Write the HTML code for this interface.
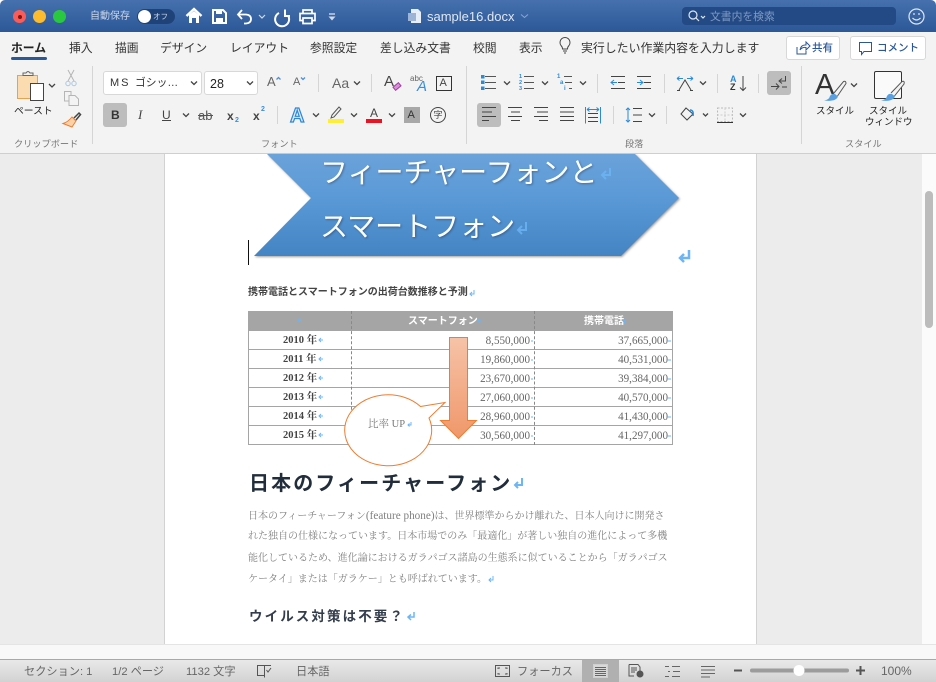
<!DOCTYPE html>
<html lang="ja"><head><meta charset="utf-8"><style>
*{box-sizing:border-box}
html,body{margin:0;padding:0;width:936px;height:682px;overflow:hidden;background:#fff}
body{position:relative;font-family:"Liberation Sans","Noto Sans CJK JP",sans-serif;color:#333}
.a{position:absolute}
.t{position:absolute;white-space:nowrap;line-height:1}
.tab{font-size:11.8px;color:#333;top:43px}
.s{font-family:"Liberation Serif","Noto Serif CJK SC",serif}
.gl{font-size:9.2px;color:#777;top:140px}
.cell{position:absolute;white-space:nowrap;line-height:1;font-family:"Liberation Serif","Noto Serif CJK SC",serif;font-size:11.1px;color:#666}
.r{text-align:right}
.y{font-weight:bold;color:#444;font-size:10.5px}
.sv{position:absolute;overflow:visible}
.body-l{position:absolute;left:248px;width:425px;white-space:nowrap;font-family:"Liberation Serif","Noto Serif CJK SC",serif;font-size:10px;color:#808080;line-height:1}
.st{font-size:11.2px;color:#666;top:667px}
.lb{font-size:9.5px;color:#222}
</style></head><body>
<!-- title bar -->
<div class="a" style="left:0;top:0;width:936px;height:32px;background:linear-gradient(#4671ae,#2c5898);border-radius:5px 5px 0 0"></div>
<div class="a" style="left:13px;top:10px;width:13px;height:13px;border-radius:50%;background:#fc5c57"></div><div class="a" style="left:17.5px;top:14.5px;width:4px;height:4px;border-radius:50%;background:#7d1512"></div>
<div class="a" style="left:33px;top:10px;width:13px;height:13px;border-radius:50%;background:#fdbc2e"></div>
<div class="a" style="left:53px;top:10px;width:13px;height:13px;border-radius:50%;background:#2ac83f"></div>
<span class="t" style="left:90px;top:12px;font-size:10px;color:#c9d6ea">自動保存</span>
<div class="a" style="left:137px;top:9px;width:38px;height:15px;border-radius:8px;background:#1f4379"></div>
<div class="a" style="left:138px;top:10px;width:13px;height:13px;border-radius:50%;background:#fff"></div>
<span class="t" style="left:153px;top:13px;font-size:7.500px;color:#c9d6ea">オフ</span>
<svg class="sv" style="left:0;top:0" width="936" height="32" fill="none" stroke="#fff" stroke-width="1.800">
<path d="M186.500 16L194 9 201.500 16" stroke-width="2.400"/><path d="M189 15L194 11 199 15V23H196V18H192V23H189Z" fill="#fff" stroke="none"/>
<path d="M213 10H223L226 13V23H213Z" stroke-width="2"/><path d="M216 10V14H222V10Z" fill="#fff" stroke="none"/><path d="M216 23V18H223V23Z" fill="#fff" stroke="none"/>
<path d="M242 10L238 14.500 242 19M238 14.500H246Q251 15 251 19T246 23.500H244" stroke-width="1.800"/>
<path d="M259 15L262 18 265 15" stroke-width="1.200" stroke="#cfdaeb"/>
<path d="M279 13A7 7 0 1 0 288 15.500M285 9.500V16H290" stroke-width="2"/>
<path d="M303 13.500V10H312V13.500M303 20.500H300V13.500H315V20.500H312M303 18H312V23.500H303Z" stroke-width="1.700"/>
<path d="M329 14H335" stroke="#cfdaeb" stroke-width="1.400"/><path d="M328.500 16.500H335.500L332 20.500Z" fill="#cfdaeb" stroke="none"/>
</svg>
<svg class="sv" style="left:408px;top:8px" width="14" height="17"><path d="M3 1H10L13 4V15H3Z" fill="#e8eef7"/><rect x="0" y="5" width="8" height="8" fill="#9db4d6"/></svg>
<span class="t" style="left:427px;top:10px;font-size:13px;color:#dfe7f3">sample16.docx</span>
<svg class="sv" style="left:520px;top:13px" width="10" height="7"><path d="M1 1.500L4.500 4.500 8 1.500" fill="none" stroke="#8ea7cc"/></svg>
<div class="a" style="left:682px;top:7px;width:214px;height:18px;border-radius:4px;background:#234a85"></div>
<svg class="sv" style="left:688px;top:10px" width="22" height="14" fill="none" stroke="#dfe7f3" stroke-width="1.200"><circle cx="5" cy="5" r="4"/><path d="M8 8L11 11"/><path d="M13 6L15 8 17 6"/></svg>
<span class="t" style="left:710px;top:12px;font-size:10.800px;color:#7f9ac4">文書内を検索</span>
<svg class="sv" style="left:908px;top:8px" width="17" height="17" fill="none" stroke="#dfe7f3" stroke-width="1.200"><circle cx="8.500" cy="8.500" r="7.500"/><path d="M4.500 10Q8.500 14 12.500 10"/><path d="M6 5V7M11 5V7"/></svg>

<!-- ribbon -->
<div class="a" style="left:0;top:32px;width:936px;height:122px;background:#f3f3f3;border-bottom:1px solid #cfcfcf"></div>
<span class="t tab" style="left:11px;font-weight:bold;color:#222">ホーム</span>
<div class="a" style="left:11px;top:57px;width:36px;height:3px;border-radius:2px;background:#2b5797"></div>
<span class="t tab" style="left:69px">挿入</span>
<span class="t tab" style="left:115px">描画</span>
<span class="t tab" style="left:160px">デザイン</span>
<span class="t tab" style="left:230px">レイアウト</span>
<span class="t tab" style="left:310px">参照設定</span>
<span class="t tab" style="left:380px">差し込み文書</span>
<span class="t tab" style="left:473px">校閲</span>
<span class="t tab" style="left:519px">表示</span>
<svg class="sv" style="left:558px;top:37px" width="14" height="18" fill="none" stroke="#444" stroke-width="1"><path d="M4.500 12Q4.500 10 3 8.500A5 5 0 1 1 11 8.500Q9.500 10 9.500 12ZM5 14H9M6 16H8"/></svg>
<span class="t tab" style="left:581px;font-size:11.900px">実行したい作業内容を入力します</span>
<div class="a" style="left:786px;top:36px;width:54px;height:24px;background:#fff;border:1px solid #d8d8d8;border-radius:3px"></div>
<svg class="sv" style="left:795px;top:41px" width="16" height="15" fill="none" stroke="#2b5797" stroke-width="1"><path d="M2 6V13H11V10M5 9Q6 4 10 4H11V1L15 5 11 9V6.500Q7 6 5 9Z"/></svg>
<span class="t" style="left:812px;top:43px;font-size:10.500px;color:#2b5797;font-weight:500">共有</span>
<div class="a" style="left:850px;top:36px;width:76px;height:24px;background:#fff;border:1px solid #d8d8d8;border-radius:3px"></div>
<svg class="sv" style="left:858px;top:41px" width="16" height="15" fill="none" stroke="#2b5797" stroke-width="1"><path d="M1.500 1.500H13.500V10.500H6L3.500 13.500V10.500H1.500Z"/></svg>
<span class="t" style="left:877px;top:43px;font-size:10.500px;color:#2b5797;font-weight:500">コメント</span>

<!-- separators -->
<div class="a" style="left:92px;top:66px;width:1px;height:78px;background:#d5d5d5"></div>
<div class="a" style="left:466px;top:66px;width:1px;height:78px;background:#d5d5d5"></div>
<div class="a" style="left:801px;top:66px;width:1px;height:78px;background:#d5d5d5"></div>

<!-- clipboard -->
<svg class="sv" style="left:12px;top:68px" width="72" height="36" fill="none">
<rect x="5.500" y="7.500" width="20" height="23" fill="#fbdcb0" stroke="#e8a24f"/>
<path d="M11 7.500V5H14Q16 2 18 5H21V7.500Z" fill="#f3f3f3" stroke="#666"/>
<rect x="18.500" y="15.500" width="13" height="17" fill="#fff" stroke="#444"/>
<path d="M37 16L40 19 43 16" stroke="#444" stroke-width="1.300"/>
</svg>
<span class="t" style="left:14px;top:107px;font-size:9.800px;color:#222">ペースト</span>
<svg class="sv" style="left:60px;top:68px" width="24" height="64" fill="none" stroke="#bbb">
<path d="M8 2L14 13M14 2L8 13" stroke="#b5b5b5"/><circle cx="8" cy="15.500" r="2.200" stroke="#a9c8e6"/><circle cx="14" cy="15.500" r="2.200" stroke="#a9c8e6"/>
<path d="M9 27.500H15L18.500 31V37.500H9ZM9 33H4.500V23.500H11V27" stroke="#b5b5b5"/>
<path d="M12 49L16 53 12 59 3 55.500Q8 54 12 49Z" fill="#fbd2a8" stroke="#ed7d31"/><path d="M14 50L19 45 20.500 46.500 16 52" stroke="#444" stroke-width="1.500"/>
</svg>
<span class="t gl" style="left:14px">クリップボード</span>

<!-- font row 1 -->
<div class="a" style="left:103px;top:71px;width:99px;height:24px;background:#fff;border:1px solid #d8d8d8;border-radius:3px"></div>
<span class="t" style="left:110px;top:78px;font-size:11px;letter-spacing:2px;color:#333">MS</span>
<span class="t" style="left:135px;top:78px;font-size:10.800px;color:#333">ゴシッ…</span>
<div class="a" style="left:204px;top:71px;width:54px;height:24px;background:#fff;border:1px solid #d8d8d8;border-radius:3px"></div>
<span class="t" style="left:210px;top:78px;font-size:12.500px;color:#222">28</span>
<svg class="sv" style="left:0;top:0" width="936" height="153" fill="none" stroke="#444" stroke-width="1.300">
<path d="M191 81.500L194 84.500 197 81.500M247 81.500L250 84.500 253 81.500M354 81.500L357 84.500 360 81.500"/>
<path d="M504 81.500L507 84.500 510 81.500M542 81.500L545 84.500 548 81.500M580 81.500L583 84.500 586 81.500M700 81.500L703 84.500 706 81.500"/>
<path d="M183 113.500L186 116.500 189 113.500M313 113.500L316 116.500 319 113.500M351 113.500L354 116.500 357 113.500M389 113.500L392 116.500 395 113.500"/>
<path d="M649 113.500L652 116.500 655 113.500M703 113.500L705.500 116 708 113.500M740 113.500L743 116.500 746 113.500"/>
<path d="M276.500 79.500L278.500 77.500 280.500 79.500M301 77.500L303 79.500 305 77.500" stroke="#4a90d9"/>
</svg>
<span class="t" style="left:267px;top:75px;font-size:13px;color:#666">A</span>
<span class="t" style="left:293px;top:77px;font-size:11px;color:#666">A</span>
<div class="a" style="left:318px;top:74px;width:1px;height:18px;background:#d5d5d5"></div>
<span class="t" style="left:332px;top:76px;font-size:14px;color:#666">Aa</span>
<div class="a" style="left:371px;top:74px;width:1px;height:18px;background:#d5d5d5"></div>
<span class="t" style="left:384px;top:74px;font-size:15px;color:#444">A</span>
<div class="a" style="left:393px;top:84px;width:8px;height:5px;background:#d88fd8;border:1px solid #a040a0;transform:rotate(-40deg)"></div>
<span class="t" style="left:410px;top:75px;font-size:8px;color:#666">abc</span>
<span class="t" style="left:417px;top:79px;font-size:15px;font-style:italic;color:#3a8fd9">A</span>
<div class="a" style="left:436px;top:76px;width:16px;height:15px;border:1px solid #333"></div>
<span class="t" style="left:439.500px;top:78px;font-size:11px;color:#444">A</span>

<!-- font row 2 -->
<div class="a" style="left:103px;top:103px;width:24px;height:24px;background:#bdbdbd;border-radius:3px"></div>
<span class="t" style="left:111px;top:109px;font-size:12px;font-weight:bold;color:#333">B</span>
<span class="t s" style="left:138px;top:108px;font-size:13px;font-style:italic;color:#444">I</span>
<span class="t" style="left:162px;top:109px;font-size:12px;color:#444">U</span><div class="a" style="left:162px;top:120px;width:9px;height:1px;background:#444"></div>
<span class="t" style="left:198px;top:109px;font-size:13px;color:#555">ab</span><div class="a" style="left:198px;top:115px;width:15px;height:1px;background:#555"></div>
<span class="t" style="left:227px;top:110px;font-size:12px;font-weight:bold;color:#444">x</span><span class="t" style="left:235px;top:117px;font-size:7px;color:#3a8fd9;font-weight:bold">2</span>
<span class="t" style="left:253px;top:110px;font-size:12px;font-weight:bold;color:#444">x</span><span class="t" style="left:261px;top:106px;font-size:7px;color:#3a8fd9;font-weight:bold">2</span>
<div class="a" style="left:277px;top:106px;width:1px;height:18px;background:#d5d5d5"></div>
<span class="t" style="left:290px;top:106px;font-size:20px;font-weight:bold;color:#dcecfa;-webkit-text-stroke:1.200px #2f86d6">A</span>
<svg class="sv" style="left:328px;top:104px" width="18" height="20" fill="none" stroke="#555"><path d="M4 11L11 3 13 5 6 13 3 14Z"/><rect x="0" y="15" width="16" height="4" fill="#ffee33" stroke="none"/></svg>
<span class="t" style="left:370px;top:107px;font-size:12px;color:#444">A</span>
<div class="a" style="left:366px;top:119px;width:16px;height:4px;background:#f01020"></div>
<div class="a" style="left:404px;top:107px;width:16px;height:16px;background:#a8a8a8"></div>
<span class="t" style="left:407.500px;top:110px;font-size:11px;color:#333">A</span>
<div class="a" style="left:430px;top:107px;width:16px;height:16px;border:1px solid #444;border-radius:50%"></div>
<span class="t" style="left:433.500px;top:110.500px;font-size:9px;color:#444">字</span>
<span class="t gl" style="left:261px">フォント</span>

<!-- paragraph icons -->
<svg class="sv" style="left:0;top:0" width="936" height="153" fill="none" stroke="#555" stroke-width="1">
<path d="M485 76.500H496M485 82.500H496M485 88.500H496M524 76.500H534M524 82.500H534M524 88.500H534M564 76.500H572M565 82.500H572M569 88.500H572"/>
<path d="M481 75H484.500V78.500H481ZM481 80.500H484.500V84H481ZM481 86.500H484.500V90H481Z" fill="#2b8ad6" stroke="none"/>
<path d="M611 76.500H625M618 82.500H625M611 88.500H625M637 76.500H651M637 88.500H651M644 82.500H651" stroke="#444"/>
<path d="M617 82.500H611M614 80L611 82.500 614 85M637 82.500H643M640 80L643 82.500 640 85" stroke="#2b8ad6"/>
<path d="M677 90.500H680M690 90.500H693M679 90L685 80 691 90" stroke="#444"/><path d="M677 78.500H683M687 78.500H693M677 78.500L679.500 76.500M677 78.500L679.500 80.500M693 78.500L690.500 76.500M693 78.500L690.500 80.500" stroke="#2b8ad6"/>
<path d="M743 76V90.500M740 87.500L743 90.500 746 87.500" stroke="#444"/>
<path d="M597.500 74V93M664.500 74V93M717.500 74V93M758.500 74V93" stroke="#d5d5d5"/>
<!-- align row -->
<path d="M508 107.500H522M511 112H520M508 116.500H522M511 120.500H520M534 107.500H548M537 112H548M534 116.500H548M539 120.500H548M560 107.500H574M560 112H574M560 116.500H574M560 120.500H574M588 113.500H598M588 117.500H598M588 121.500H598M633 108.500H642M633 115H642M633 121.500H642" stroke="#444"/>
<path d="M585.500 107V123.500M600.500 107V123.500M587 109.500H599M587 109.500L589.500 107.500M587 109.500L589.500 111.500M599 109.500L596.500 107.500M599 109.500L596.500 111.500M628 108V122M626 110L628 108 630 110M626 120L628 122 630 120" stroke="#2b8ad6"/>
<path d="M613.500 106V124M666.500 106V124" stroke="#d5d5d5"/>
<path d="M686 108L681 114 687 120 693 114Z" stroke="#444"/><path d="M690 110Q694 110 693 116" stroke="#2b8ad6" stroke-width="1.500"/>
<path d="M717.500 108H732.500V121.500H717.500Z" stroke="#bbb" stroke-dasharray="2 1.500"/><path d="M717 122.500H733" stroke="#333"/><path d="M725 108V122M717 115H733" stroke="#ccc" stroke-dasharray="2 1.500"/>
</svg>
<span class="t" style="left:519px;top:74px;font-size:5.500px;line-height:6px;color:#2b8ad6;white-space:pre;font-weight:bold">1
2
3</span>
<span class="t" style="left:557px;top:74px;font-size:6px;color:#2b8ad6;font-weight:bold">1</span>
<span class="t" style="left:560px;top:80px;font-size:6px;color:#2b8ad6;font-weight:bold">a</span>
<span class="t" style="left:564px;top:86px;font-size:6px;color:#2b8ad6;font-weight:bold">i</span>
<div class="a" style="left:477px;top:103px;width:24px;height:24px;background:#bdbdbd;border-radius:3px"></div>
<svg class="sv" style="left:477px;top:103px" width="24" height="24" fill="none" stroke="#444"><path d="M5 4.500H19M5 9H15M5 13.500H19M5 17.500H12"/></svg>
<span class="t" style="left:730px;top:75px;font-size:9px;font-weight:bold;color:#2b8ad6">A</span><span class="t" style="left:730px;top:83px;font-size:9px;font-weight:bold;color:#333">Z</span>
<div class="a" style="left:767px;top:71px;width:24px;height:24px;background:#bdbdbd;border-radius:3px"></div>
<svg class="sv" style="left:767px;top:71px" width="24" height="24" fill="none" stroke="#444"><path d="M4 15.500H12M9 12.500L12 15.500 9 18.500M18.500 5V10H12M15 7.500L12 10 15 12.500M15 16H20"/></svg>
<span class="t gl" style="left:625px">段落</span>

<!-- styles -->
<span class="t" style="left:815px;top:71px;font-size:29px;color:#333">A</span>
<svg class="sv" style="left:0;top:0" width="936" height="153" fill="none">
<path d="M834 93L843.500 81.500Q846 80.500 846 83.500L837.500 96" fill="#f3f3f3" stroke="#555"/><path d="M824 100.500Q829 100 830 96 832 93 835 94L838 96.500Q836 102 824 100.500Z" fill="#5aa0e0"/>
<path d="M851 83.500L854 86.500 857 83.500" stroke="#444" stroke-width="1.300"/>
</svg>
<div class="a" style="left:874px;top:71px;width:28px;height:28px;background:#fafafa;border:1px solid #333;border-radius:2px"></div>
<svg class="sv" style="left:0;top:0" width="936" height="153" fill="none">
<path d="M891 93L902 81.500Q905 80.500 904 84L894.500 96" fill="#f3f3f3" stroke="#555"/><path d="M881 100.500Q886 100 887 96 889 93 892 94L895 96.500Q893 102 881 100.500Z" fill="#5aa0e0"/>
</svg>
<span class="t lb" style="left:816px;top:107px">スタイル</span>
<span class="t lb" style="left:869px;top:107px">スタイル</span>
<span class="t lb" style="left:865px;top:118px">ウィンドウ</span>
<span class="t gl" style="left:845px">スタイル</span>

<!-- doc area -->
<div class="a" style="left:0;top:154px;width:936px;height:490px;background:#ececec"></div>
<div class="a" style="left:164px;top:154px;width:593px;height:490px;background:#fff;border-left:1px solid #d2d2d2;border-right:1px solid #d2d2d2"></div>
<div class="a" style="left:922px;top:154px;width:14px;height:490px;background:#fbfbfb"></div>
<div class="a" style="left:925px;top:191px;width:8px;height:137px;border-radius:4px;background:#bcbcbc"></div>
<div class="a" style="left:0;top:644px;width:936px;height:15px;background:#f8f8f8;border-top:1px solid #e4e4e4"></div>

<!-- banner -->
<svg class="sv" style="left:240px;top:154px;filter:drop-shadow(1px 1.500px 1px rgba(90,80,70,.55))" width="460" height="110">
<defs><linearGradient id="g" x1="0" y1="0" x2="0" y2="1"><stop offset="0" stop-color="#6ba2da"/><stop offset=".4" stop-color="#5b9ad7"/><stop offset="1" stop-color="#4484c4"/></linearGradient></defs>
<path d="M27 0L71 44 14 102H381L439 44 395 0Z" fill="url(#g)"/>
</svg>
<span class="t" style="left:320px;top:158px;font-size:28px;line-height:30px;color:#fff;text-shadow:1px 1px 2px rgba(0,0,0,.3)">フィーチャーフォンと</span>
<span class="t" style="left:320px;top:212px;font-size:28px;line-height:30px;color:#fff;text-shadow:1px 1px 2px rgba(0,0,0,.3)">スマートフォン</span>
<svg class="sv" style="left:0;top:0" width="936" height="682" fill="none" stroke="#6db5f5" stroke-width="2">
<path d="M610 168V175H602M606 171L602 175 606 179" opacity=".8"/>
<path d="M526 222V230H518M522 226L518 230 522 234" opacity=".8"/>
<path d="M689 250V258H680M684 254L680 258 684 262" stroke-width="2.500"/>
<path d="M522 478V485H515M518 482L515 485 518 488" stroke-width="2"/>
<path d="M414 612V617H408M411 614.500L408 617 411 620" stroke-width="1.500"/>
<g stroke-width="1"><path d="M474 290V294H470M472 292L470 294 472 296"/><path d="M493 576V580H489M491 578L489 580 491 582"/></g>
</svg>
<div class="a" style="left:248px;top:240px;width:1px;height:25px;background:#111"></div>
<span class="t" style="left:248px;top:288px;font-size:10px;font-weight:bold;color:#444">携帯電話とスマートフォンの出荷台数推移と予測</span>

<!-- table -->
<div class="a" style="left:248px;top:311px;width:425px;height:20px;background:#a5a5a5"></div>
<div class="a" style="left:248px;top:331px;width:425px;height:114px;border:1px solid #a5a5a5;border-top:0"></div>
<div class="a" style="left:248px;top:349px;width:425px;height:1px;background:#a5a5a5"></div>
<div class="a" style="left:248px;top:368px;width:425px;height:1px;background:#a5a5a5"></div>
<div class="a" style="left:248px;top:387px;width:425px;height:1px;background:#a5a5a5"></div>
<div class="a" style="left:248px;top:406px;width:425px;height:1px;background:#a5a5a5"></div>
<div class="a" style="left:248px;top:425px;width:425px;height:1px;background:#a5a5a5"></div>
<div class="a" style="left:351px;top:311px;width:0;height:134px;border-left:1px dashed #888"></div>
<div class="a" style="left:534px;top:311px;width:0;height:134px;border-left:1px dashed #888"></div>
<span class="t" style="left:408px;top:317px;font-size:10px;font-weight:bold;color:#fff">スマートフォン</span>
<span class="t" style="left:584px;top:317px;font-size:10px;font-weight:bold;color:#fff">携帯電話</span>
<span class="cell y" style="left:283px;top:336px">2010 年</span><span class="cell r" style="left:430px;width:100px;top:336px">8,550,000</span><span class="cell r" style="left:568px;width:100px;top:336px">37,665,000</span>
<span class="cell y" style="left:283px;top:355px">2011 年</span><span class="cell r" style="left:430px;width:100px;top:355px">19,860,000</span><span class="cell r" style="left:568px;width:100px;top:355px">40,531,000</span>
<span class="cell y" style="left:283px;top:374px">2012 年</span><span class="cell r" style="left:430px;width:100px;top:374px">23,670,000</span><span class="cell r" style="left:568px;width:100px;top:374px">39,384,000</span>
<span class="cell y" style="left:283px;top:393px">2013 年</span><span class="cell r" style="left:430px;width:100px;top:393px">27,060,000</span><span class="cell r" style="left:568px;width:100px;top:393px">40,570,000</span>
<span class="cell y" style="left:283px;top:412px">2014 年</span><span class="cell r" style="left:430px;width:100px;top:412px">28,960,000</span><span class="cell r" style="left:568px;width:100px;top:412px">41,430,000</span>
<span class="cell y" style="left:283px;top:431px">2015 年</span><span class="cell r" style="left:430px;width:100px;top:431px">30,560,000</span><span class="cell r" style="left:568px;width:100px;top:431px">41,297,000</span>
<svg class="sv" style="left:0;top:0" width="936" height="682" fill="none" stroke="#6db5f5" stroke-width="1">
<path d="M302 320H298M300 318L298 320 300 322M481 321H478M480 319L478 321 480 323M626 321H623M625 319L623 321 625 323M323 340H319M321 338L319 340 321 342M323 359H319M321 357L319 359 321 361M323 378H319M321 376L319 378 321 380M323 397H319M321 395L319 397 321 399M323 416H319M321 414L319 416 321 418M323 435H319M321 433L319 435 321 437"/>
<path d="M533 341H531M533 360H531M533 379H531M533 398H531M533 417H531M533 436H531M671 341H668M671 360H668M671 379H668M671 398H668M671 417H668M671 436H668"/>
</svg>
<!-- arrow + bubble -->
<svg class="sv" style="left:0;top:0" width="936" height="682">
<defs><linearGradient id="o2" x1="0" y1="0" x2="0" y2="1"><stop offset="0" stop-color="#f6c3a8"/><stop offset="1" stop-color="#f0976a"/></linearGradient></defs>
<path d="M449.500 337.500H467.500V420.500H476.500L458.500 438.500 440.500 420.500H449.500Z" fill="url(#o2)" stroke="#ed7d31"/>
<path d="M420.500 406.500L445 402.500 429 418A43.500 35.500 0 1 1 420.500 406.500Z" fill="#fff" stroke="#ed7d31"/>
</svg>
<span class="cell" style="left:368px;top:420px;font-size:10.500px;color:#777">比率 UP</span>
<svg class="sv" style="left:406px;top:421px" width="8" height="8" fill="none" stroke="#6db5f5"><path d="M5 1V4H2M3.500 2.500L2 4 3.500 5.500"/></svg>

<!-- body text -->
<span class="t" style="left:249px;top:474px;font-size:20px;font-weight:bold;letter-spacing:2.100px;color:#222d3b">日本のフィーチャーフォン</span>
<div class="body-l" style="top:511px">日本のフィーチャーフォン<span style="font-size:11.200px">(feature phone)</span>は、世界標準からかけ離れた、日本人向けに開発さ</div>
<div class="body-l" style="top:532px">れた独自の仕様になっています。日本市場でのみ「最適化」が著しい独自の進化によって多機</div>
<div class="body-l" style="top:554px">能化しているため、進化論におけるガラパゴス諸島の生態系に似ていることから「ガラパゴス</div>
<div class="body-l" style="top:575px">ケータイ」または「ガラケー」とも呼ばれています。</div>
<span class="t" style="left:249px;top:610px;font-size:13.500px;font-weight:bold;letter-spacing:2.100px;color:#333d4b">ウイルス対策は不要？</span>

<!-- status -->
<div class="a" style="left:0;top:659px;width:936px;height:23px;background:linear-gradient(#e9e9e9,#d2d2d2);border-top:1px solid #a8a8a8"></div>
<span class="t st" style="left:24px">セクション: 1</span>
<span class="t st" style="left:112px">1/2 ページ</span>
<span class="t st" style="left:186px">1132 文字</span>
<svg class="sv" style="left:256px;top:664px" width="18" height="14" fill="none" stroke="#555"><path d="M1.500 1.500H8.500V11.500H1.500ZM8.500 1.500H15M8.500 11.500V13.500M10.500 6L12 8 15 4"/></svg>
<span class="t st" style="left:296px">日本語</span>
<svg class="sv" style="left:495px;top:665px" width="15" height="12" fill="none" stroke="#555"><rect x=".5" y=".5" width="14" height="11"/><path d="M3 4V3H5M10 3H12V4M3 8V9H5M10 9H12V8"/></svg>
<span class="t st" style="left:517px">フォーカス</span>
<div class="a" style="left:582px;top:660px;width:37px;height:22px;background:#b0b0b0"></div>
<svg class="sv" style="left:0;top:0" width="936" height="682" fill="none" stroke="#555">
<rect x="593.500" y="664.500" width="14" height="13" fill="#d8d8d8" stroke="#d0d0d0"/>
<path d="M595 667.500H606M595 669.500H606M595 671.500H606M595 673.500H606M595 675.500H606" stroke="#666"/>
<path d="M629 664.500H638L640 667V672M629 664.500V676H634M631 668H637M631 670H637M631 672H635" stroke="#555"/><circle cx="640" cy="674" r="3.500" fill="#555" stroke="none"/>
<path d="M665 666.500H669M672 666.500H680M668 671.500H670M673 671.500H680M665 676.500H669M672 676.500H680" stroke="#666"/>
<path d="M701 666.500H715M701 670H715M701 673.500H715M701 677H710" stroke="#666"/>
<path d="M734 670.500H742M856 670.500H865M860.500 666V675" stroke="#555" stroke-width="2"/>
<path d="M752 670.500H847" stroke="#9c9c9c" stroke-width="4" stroke-linecap="round"/>
<circle cx="799" cy="670.500" r="5.500" fill="#fff" stroke="none"/>
</svg>
<span class="t" style="left:881px;top:665px;font-size:12px;color:#666">100%</span>
</body></html>
